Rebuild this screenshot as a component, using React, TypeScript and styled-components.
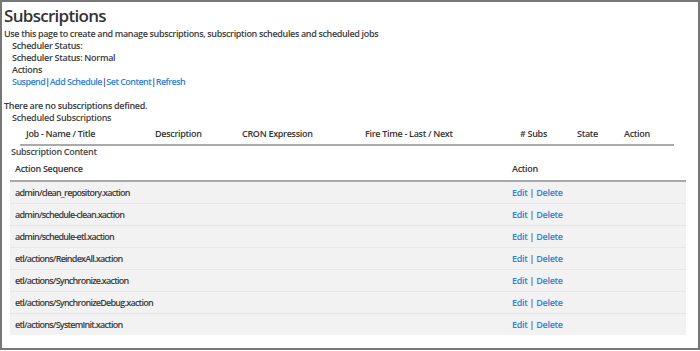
import styled, { createGlobalStyle } from 'styled-components';

const GlobalStyle = createGlobalStyle`
  html, body {
    margin: 0;
    padding: 0;
    background: #fff;
  }
  body {
    font-family: 'Open Sans', 'Noto Sans', sans-serif;
    color: #3a3a3a;
  }
`;

const jobColumns = [
  'Job - Name / Title',
  'Description',
  'CRON Expression',
  'Fire Time - Last / Next',
  '# Subs',
  'State',
  'Action',
];

const actionSequences = [
  'admin/clean_repository.xaction',
  'admin/schedule-clean.xaction',
  'admin/schedule-etl.xaction',
  'etl/actions/ReindexAll.xaction',
  'etl/actions/Synchronize.xaction',
  'etl/actions/SynchronizeDebug.xaction',
  'etl/actions/SystemInit.xaction',
];

const App = () => {
  return (
    <>
      <GlobalStyle />
      <Frame>
        <Title>Subscriptions</Title>
        <Intro>Use this page to create and manage subscriptions, subscription schedules and scheduled jobs</Intro>
        <Indented>
          <Line>Scheduler Status:</Line>
          <Line>Scheduler Status: Normal</Line>
          <Line>Actions</Line>
          <Links>
            <Link href="#">Suspend</Link>|<Link href="#">Add Schedule</Link>|<Link href="#">Set Content</Link>|
            <Link href="#">Refresh</Link>
          </Links>
        </Indented>
        <Notice>There are no subscriptions defined.</Notice>
        <SectionLabel>Scheduled Subscriptions</SectionLabel>
        <JobHeader>
          {jobColumns.map((c) => (
            <HeadCell key={c}>{c}</HeadCell>
          ))}
        </JobHeader>
        <SectionLabel $tight>Subscription Content</SectionLabel>
        <ContentTable>
          <ContentHead>
            <HeadCell>Action Sequence</HeadCell>
            <HeadCell>Action</HeadCell>
          </ContentHead>
          {actionSequences.map((a) => (
            <ContentRow key={a}>
              <SequenceCell>{a}</SequenceCell>
              <ActionCell>
                <Link href="#">Edit</Link> <Sep>|</Sep> <Link href="#">Delete</Link>
              </ActionCell>
            </ContentRow>
          ))}
        </ContentTable>
      </Frame>
    </>
  );
};

const Frame = styled.div`
  box-sizing: border-box;
  height: 350px;
  border: 2px solid #777;
  padding: 2px 0 0 2px;
  font-size: 9px;
  font-weight: 600;
  letter-spacing: -0.3px;
`;

const Title = styled.h1`
  margin: 0;
  font-size: 17px;
  font-weight: 600;
  line-height: 24px;
  letter-spacing: -0.7px;
  color: #333;
`;

const Intro = styled.div`
  line-height: 12px;
  letter-spacing: -0.35px;
`;

const Indented = styled.div`
  padding-left: 8px;
`;

const Line = styled.div`
  line-height: 12px;
`;

const Links = styled.div`
  line-height: 12px;
  color: #3a3a3a;
  margin-bottom: 12px;
  letter-spacing: -0.55px;
`;

const Link = styled.a`
  color: #2f7fd3;
  text-decoration: none;
`;

const Sep = styled.span`
  color: #555;
`;

const Notice = styled.div`
  line-height: 12px;
`;

const SectionLabel = styled.div<{ $tight?: boolean }>`
  line-height: 12px;
  padding-left: ${(p) => (p.$tight ? '7px' : '8px')};
  color: #444;
`;

const JobHeader = styled.div`
  display: grid;
  grid-template-columns: 129px 87px 123px 155px 57px 47px 1fr;
  width: 648px;
  margin-left: 16px;
  padding: 4px 0 4px 6px;
  line-height: 12px;
  border-bottom: 2px solid #aaa;
`;

const HeadCell = styled.div`
  color: #333;
`;

const ContentTable = styled.div`
  margin: 0 12px 0 6px;
`;

const ContentHead = styled.div`
  display: grid;
  grid-template-columns: 497px 1fr;
  padding: 5px 0 5px 5px;
  line-height: 12px;
  border-bottom: 2px solid #aaa;
`;

const ContentRow = styled.div`
  display: grid;
  grid-template-columns: 497px 1fr;
  align-items: center;
  height: 21px;
  padding-left: 5px;
  background: #f2f2f2;
  border-bottom: 1px solid #e6e6e6;
  &:last-child {
    border-bottom: none;
  }
`;

const SequenceCell = styled.div`
  line-height: 12px;
  color: #3a3a3a;
  letter-spacing: -0.75px;
`;

const ActionCell = styled.div`
  line-height: 12px;
`;

export default App;
